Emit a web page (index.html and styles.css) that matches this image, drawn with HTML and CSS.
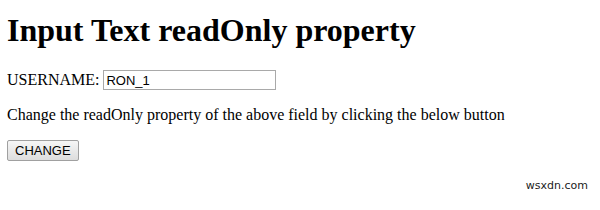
FILE: index.html
```html
<!DOCTYPE html>
<html lang="en">

<head>
    <meta charset="UTF-8" />
    <title>Input Text readOnly property</title>
    <link rel="stylesheet" href="styles.css">
</head>

<body>
    <h1>Input Text readOnly property</h1>
    USERNAME: <input type="text" id="USR" value="RON_1">
    <p>Change the readOnly property of the above field by clicking the below button</p>
    <button type="button" onclick="changeRead()">CHANGE</button>
    <p id="Sample"></p>
    <div class="watermark">wsxdn.com</div>

    <script>
        function changeRead() {
            document.getElementById("USR").readOnly = true;
            document.getElementById("Sample").innerHTML = "The input text field is now read only";
        }
    </script>
</body>

</html>
```

FILE: styles.css
```css
body {
    margin: 8px 8px 8px 7px;
    font-family: "Liberation Serif", serif;
    font-size: 16px;
}

h1 {
    font-size: 32px;
    margin: 4px 0 21px;
}

input {
    box-sizing: border-box;
    width: 173px;
    height: 20px;
    font-family: "Liberation Sans", Arial, sans-serif;
    font-size: 13px;
    padding: 1px 2px;
    border: 1px solid #a9a9a9;
}

button {
    box-sizing: border-box;
    height: 21px;
    font-family: "Liberation Sans", Arial, sans-serif;
    font-size: 13px;
    padding: 1px 7px;
    border: 1px solid #a0a0a0;
    border-radius: 2px;
    background: linear-gradient(#f6f6f6, #dddddd);
    color: #000;
}

.watermark {
    position: absolute;
    right: 12px;
    bottom: 18px;
    font-family: "DejaVu Sans", sans-serif;
    font-size: 11px;
    color: #222;
}
```
